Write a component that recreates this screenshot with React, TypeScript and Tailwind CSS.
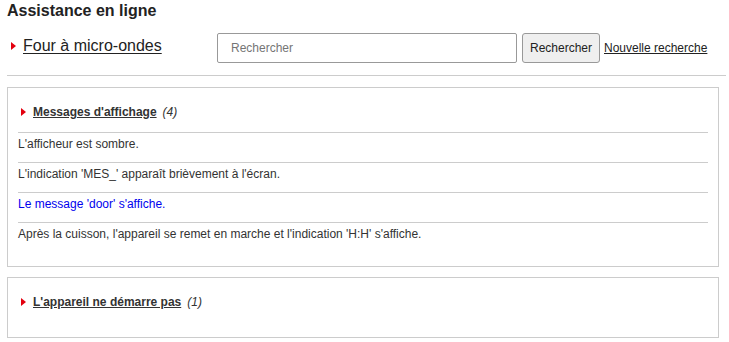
import React from "react";

function Tri({ className = "" }: { className?: string }) {
  return (
    <svg width="5" height="8" viewBox="0 0 5 8" className={className}>
      <polygon points="0,0 5,4 0,8" fill="#e3000f" />
    </svg>
  );
}

const rows: { text: string; blue?: boolean }[] = [
  { text: "L'afficheur est sombre." },
  { text: "L'indication 'MES_' apparaît brièvement à l'écran." },
  { text: "Le message 'door' s'affiche.", blue: true },
  {
    text: "Après la cuisson, l'appareil se remet en marche et l'indication 'H:H' s'affiche.",
  },
];

export default function App() {
  return (
    <div
      className="w-[729px] h-[342px] bg-white pl-[7px] pr-[3px] pt-[2px] text-[#333] overflow-hidden"
      style={{ fontFamily: '"Liberation Sans", Arial, sans-serif' }}
    >
      <h1 className="text-[16px] leading-[18px] font-bold text-[#222]">
        Assistance en ligne
      </h1>

      <div className="flex items-start mt-[13px] h-[30px]">
        <div className="w-[210px] flex items-center mt-[4px]">
          <Tri className="ml-[4px] mr-[7px]" />
          <a
            href="#"
            className="text-[16px] leading-[18px] text-[#222] underline underline-offset-[2px]"
          >
            Four à micro-ondes
          </a>
        </div>
        <input
          type="text"
          placeholder="Rechercher"
          className="w-[300px] h-[30px] border border-[#999] rounded-[2px] pl-[13px] text-[12px] text-[#222] placeholder:text-[#757575] outline-none"
        />
        <button className="ml-[5px] w-[78px] h-[30px] border border-[#999] rounded-[3px] bg-[#efefef] text-[12px] text-[#222]">
          Rechercher
        </button>
        <a
          href="#"
          className="ml-[4px] mt-[7px] text-[12px] leading-[16px] text-[#222] underline"
        >
          Nouvelle recherche
        </a>
      </div>

      <div className="mt-[12px] h-px bg-[#ccc] w-[719px]" />

      <div className="mt-[11px] w-[712px] border border-[#ccc] px-[10px] pb-[14px]">
        <div className="h-[44px] pt-[16px] flex items-start">
          <Tri className="ml-[3px] mr-[7px] mt-[4px]" />
          <a
            href="#"
            className="text-[12px] leading-[16px] font-bold text-[#333] underline"
          >
            Messages d'affichage
          </a>
          <span className="ml-[6px] text-[12px] leading-[16px] italic text-[#333]">
            (4)
          </span>
        </div>
        {rows.map((r, i) => (
          <div
            key={i}
            className={`border-t border-[#ccc] h-[30px] pt-[3px] text-[12px] leading-[16px] ${
              r.blue ? "text-[#0000ee]" : "text-[#333]"
            }`}
          >
            {r.text}
          </div>
        ))}
      </div>

      <div className="mt-[10px] w-[712px] border border-[#ccc] px-[10px] pb-[15px]">
        <div className="h-[44px] pt-[16px] flex items-start">
          <Tri className="ml-[3px] mr-[7px] mt-[4px]" />
          <a
            href="#"
            className="text-[12px] leading-[16px] font-bold text-[#333] underline"
          >
            L'appareil ne démarre pas
          </a>
          <span className="ml-[6px] text-[12px] leading-[16px] italic text-[#333]">
            (1)
          </span>
        </div>
      </div>
    </div>
  );
}
